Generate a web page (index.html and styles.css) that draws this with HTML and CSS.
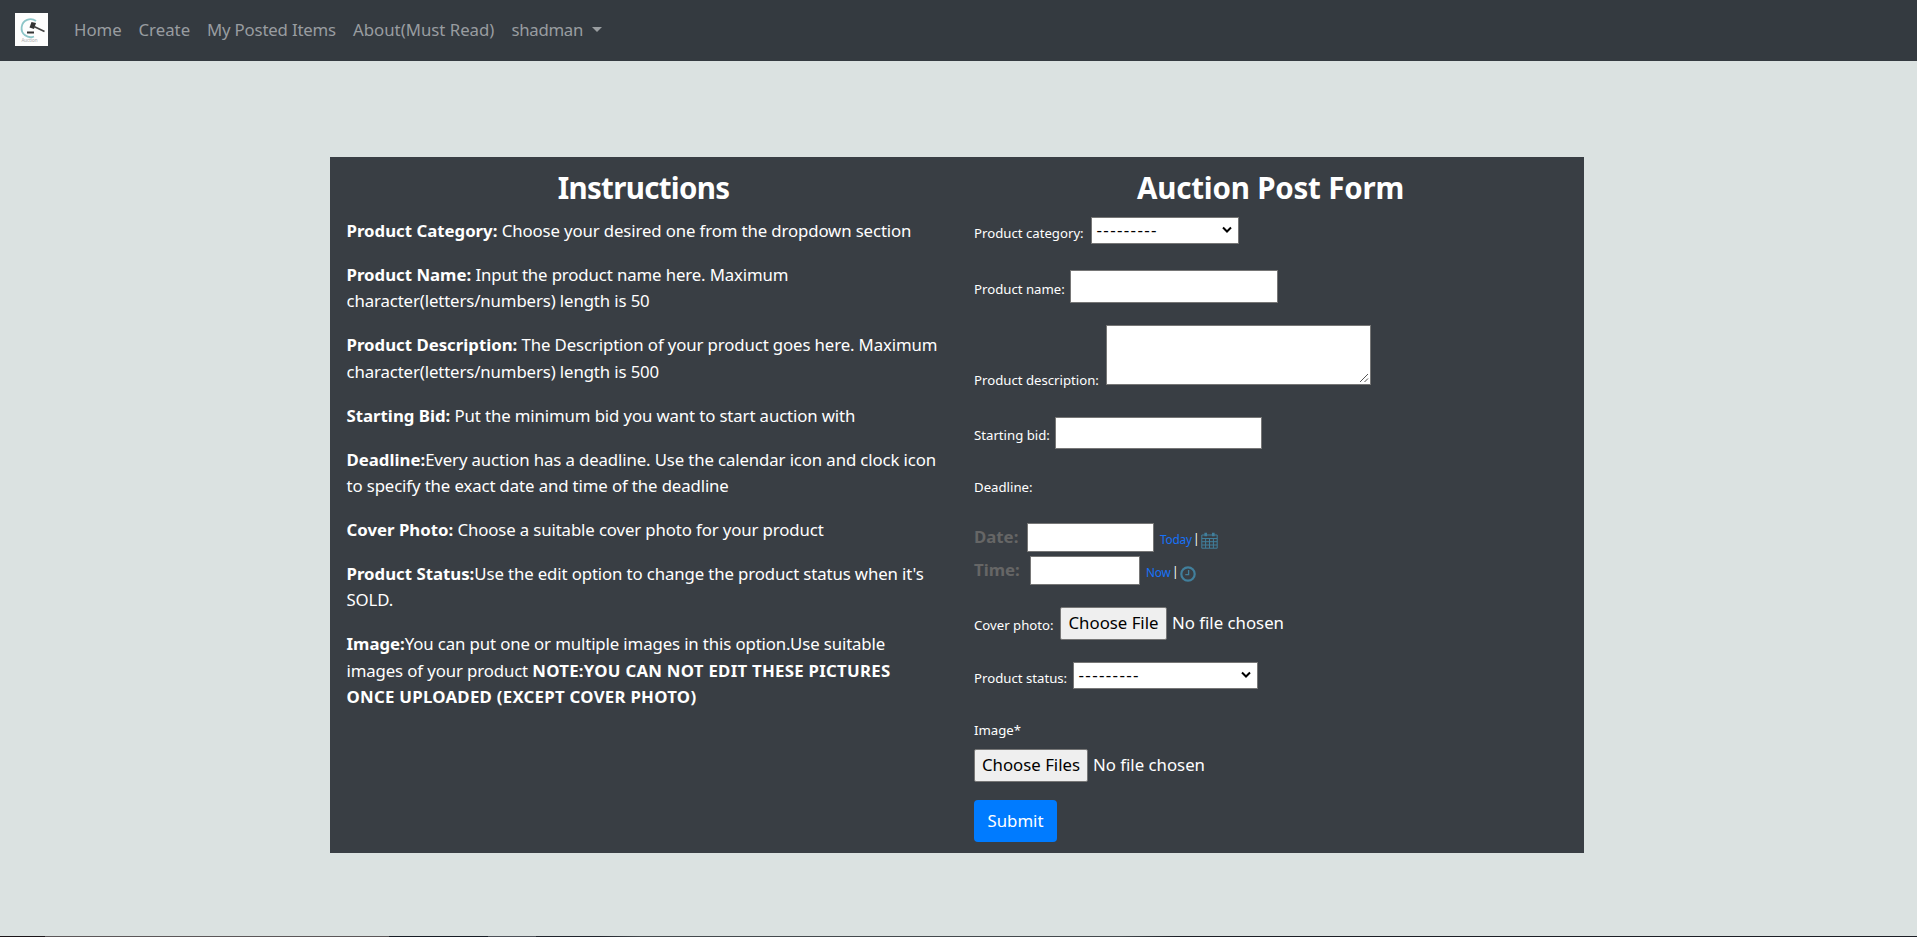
FILE: index.html
```html
<!DOCTYPE html>
<html lang="en">
<head>
<meta charset="utf-8">
<title>Auction Post Form</title>
<link rel="stylesheet" href="styles.css">
</head>
<body>
<nav class="navbar">
  <svg class="logo" viewBox="0 0 33 33"><rect width="33" height="33" fill="#fdfdfd"/><path d="M21 8A9 9 0 1 0 19 23.500" fill="none" stroke="#8cc5c8" stroke-width="1.800"/><path d="M16.500 9l4.500 1-2 6-4.500-1.500z" fill="#333"/><path d="M19 13.500l10.500 5" stroke="#444" stroke-width="1.800"/><path d="M12 19.500h7" stroke="#333" stroke-width="2"/><text x="14.500" y="29" text-anchor="middle" class="logo-text">Auction</text></svg>
  <a class="link home">Home</a><a class="link create">Create</a><a class="link posted">My Posted Items</a><a class="link about">About(Must Read)</a><a class="link user">shadman</a><span class="caret"></span>
</nav>
<main class="card">
  <section class="col">
    <h3 class="instructions">Instructions</h3>
    <p><b>Product Category:</b> Choose your desired one from the dropdown section</p>
    <p><b>Product Name:</b> Input the product name here. Maximum<br>character(letters/numbers) length is 50</p>
    <p><b>Product Description:</b> The Description of your product goes here. Maximum<br>character(letters/numbers) length is 500</p>
    <p><b>Starting Bid:</b> Put the minimum bid you want to start auction with</p>
    <p><b>Deadline:</b>Every auction has a deadline. Use the calendar icon and clock icon<br>to specify the exact date and time of the deadline</p>
    <p><b>Cover Photo:</b> Choose a suitable cover photo for your product</p>
    <p><b>Product Status:</b>Use the edit option to change the product status when it's<br>SOLD.</p>
    <p><b>Image:</b>You can put one or multiple images in this option.Use suitable<br>images of your product <b class="note">NOTE:YOU CAN NOT EDIT THESE PICTURES<br>ONCE UPLOADED (EXCEPT COVER PHOTO)</b></p>
  </section>
  <section class="col">
    <h3>Auction Post Form</h3>
    <form>
      <div class="row category"><label>Product category:</label><div class="select"><span>---------</span><svg viewBox="0 0 10 8"><path d="M1 1.500l4 4 4-4"/></svg></div></div>
      <div class="row name"><label>Product name:</label><input type="text"></div>
      <div class="row description"><label>Product description:</label><div class="area"><svg viewBox="0 0 10 10"><path d="M1 9l8-8M5.500 9l3.500-3.500"/></svg></div></div>
      <div class="row bid"><label>Starting bid:</label><input type="text"></div>
      <div class="row deadline"><label>Deadline:</label></div>
      <div class="row date"><label>Date:</label><input type="text"><a class="today">Today</a><span class="bar">|</span>
        <svg class="cal" viewBox="0 0 17 17"><path d="M.8 3h15.400v13.200H.8zM.8 6.500h15.400M.8 9.700h15.400M.8 13h15.400M4.600 6v10M8.500 6v10M12.400 6v10"/><path d="M4.700 .8v3.400M12.300 .8v3.400" stroke-width="2.600"/></svg></div>
      <div class="row time"><label>Time:</label><input type="text"><a class="now">Now</a><span class="bar">|</span>
        <svg class="clock" viewBox="0 0 16 16"><circle cx="8" cy="8" r="6.700" stroke-width="2.200"/><path d="M8.600 4v4.700H5.300" stroke-width="1.300"/></svg></div>
      <div class="row cover"><label>Cover photo:</label><button type="button" class="file">Choose File</button><span class="chosen">No file chosen</span></div>
      <div class="row status"><label>Product status:</label><div class="select"><span>---------</span><svg viewBox="0 0 10 8"><path d="M1 1.500l4 4 4-4"/></svg></div></div>
      <div class="row image"><label>Image*</label></div>
      <div class="row files"><button type="button" class="file">Choose Files</button><span class="chosen">No file chosen</span></div>
      <button type="button" class="submit">Submit</button>
    </form>
  </section>
</main>
<footer class="edge"></footer>
</body>
</html>
```
FILE: styles.css
```css
* { box-sizing: border-box; }
body { margin: 0; height: 937px; overflow: hidden; display: flex; flex-direction: column; background: #dbe2e1; color: #fff; font: 16.8px/26.4px "Noto Sans", "Open Sans", sans-serif; }
.navbar { flex: none; height: 61px; padding-left: 15px; display: flex; align-items: center; background: #343a40; color: #999da0; white-space: nowrap; }
.logo { width: 33px; height: 33px; margin: -2px 26px 0 0; }
.logo-text { font: 4.5px "Noto Sans", sans-serif; fill: #aaa; }
.link { line-height: 26px; margin-top: -1px; }
.home { width: 64.500px; }
.create { width: 68.500px; }
.posted { width: 146px; letter-spacing: -.18px; }
.about { width: 158.500px; }
.user { width: 80.500px; letter-spacing: -.3px; }
.caret { border: 5.300px solid transparent; border-top-color: #999da0; border-bottom: 0; margin-top: -2px; }
.card { flex: none; width: 1254px; height: 696px; margin: 96px 0 0 330px; padding-top: 11.500px; display: grid; grid-template-columns: repeat(2, minmax(0, 1fr)); background: #393e44; }
.col { padding: 0 16.500px; white-space: nowrap; }
h3 { margin: 0 0 12.300px; font-size: 29.500px; line-height: 37px; text-align: center; font-weight: 700; letter-spacing: -.2px; }
.instructions { letter-spacing: -.7px; }
p { margin: 0 0 17.600px; letter-spacing: -.12px; }
b { letter-spacing: 0; }
.note { letter-spacing: .27px; }
form { display: flex; flex-direction: column; align-items: flex-start; margin-top: -1px; }
.row { display: flex; align-items: flex-start; margin-left: .5px; }
label { flex: none; font-size: 13.200px; line-height: 20px; }
input, .select, .area { flex: none; margin: 0; padding: 0; border: 1px solid #767676; background: #fff; border-radius: 0; }
.select { height: 27px; display: flex; align-items: center; justify-content: space-between; padding: 0 6px 0 5px; color: #000; font-size: 17px; letter-spacing: 1.350px; }
.select svg { width: 10px; height: 8px; fill: none; stroke: #000; stroke-width: 2; }
.category { height: 53px; }
.category label { width: 116.500px; padding-top: 6px; }
.category .select { width: 148px; }
.name { height: 55px; }
.name label { width: 96px; padding-top: 9px; }
.name input { width: 208px; height: 33px; }
.description { height: 92px; }
.description label { width: 131.500px; padding-top: 45px; }
.area { width: 265px; height: 60px; display: flex; justify-content: flex-end; align-items: flex-end; padding: 1px; }
.area svg { width: 10px; height: 10px; fill: none; stroke: #555; }
.bid { height: 60px; }
.bid label { width: 81px; padding-top: 8px; }
.bid input { width: 207px; height: 32px; }
.deadline { height: 46px; }
.date { height: 33px; }
.date label, .time label { font-size: 16.800px; font-weight: 700; color: #666; line-height: 26px; padding-top: 1px; }
.date label { width: 53px; }
.date input { width: 127px; height: 29px; }
.date a, .time a { color: #1672f8; font-size: 11.800px; line-height: 18px; margin: 7px 0 0 6px; letter-spacing: -.2px; }
.today { width: 33px; }
.bar { font-size: 12px; line-height: 18px; width: 8px; margin-top: 7px; }
.cal, .clock { fill: none; stroke: #417f9c; stroke-width: 1; }
.cal { width: 17px; height: 17px; margin-top: 9px; }
.time { height: 51px; }
.time label { width: 56px; }
.time input { width: 110px; height: 29px; }
.now { width: 26px; }
.clock { width: 16px; height: 16px; margin-top: 10.500px; }
.cover { height: 55px; }
.cover label { width: 86px; padding-top: 8px; }
.file { height: 33px; padding: 0; border: 1px solid #767676; border-radius: 2px; background: #efefef; color: #000; font: 16.800px/26px "Noto Sans", "Open Sans", sans-serif; }
.cover .file { width: 107px; }
.chosen { margin: 3px 0 0 5px; }
.status { height: 58px; }
.status label { width: 98.500px; padding-top: 6px; }
.status .select { width: 185px; }
.image { height: 29px; }
.files { height: 51px; }
.files .file { width: 114px; }
.submit { width: 83px; height: 42px; margin: 0 0 0 .5px; padding: 0; border: 0; border-radius: 4px; background: #007bff; color: #fff; font: 16.800px/26px "Noto Sans", "Open Sans", sans-serif; }
.edge { height: 1px; margin-top: auto; background: linear-gradient(90deg, #1a1518 0 45px, #5b5759 45px 389px, #171c25 389px 488px, #4d5158 488px 536px, #20242c 536px 600px, #44494d 640px 1120px, #1c1f26 1180px); }
```
